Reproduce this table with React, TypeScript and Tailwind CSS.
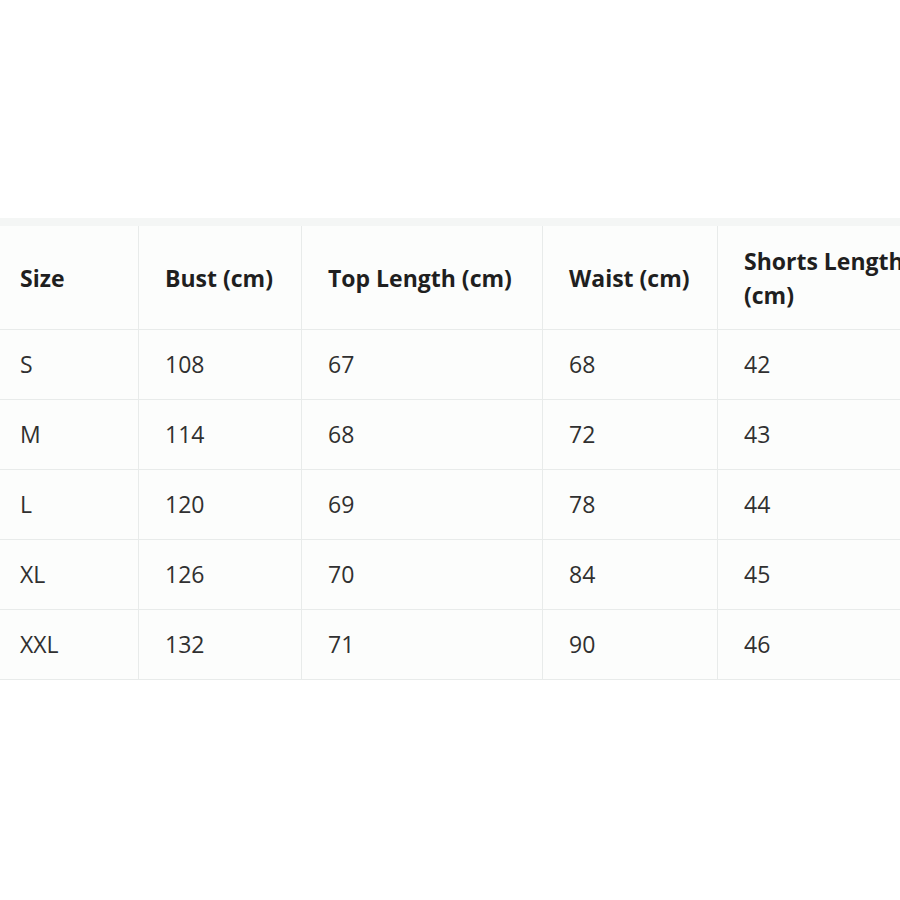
import React from "react";

const headers = ["Size", "Bust (cm)", "Top Length (cm)", "Waist (cm)", "Shorts Length (cm)"];
const rows = [
  ["S", "108", "67", "68", "42"],
  ["M", "114", "68", "72", "43"],
  ["L", "120", "69", "78", "44"],
  ["XL", "126", "70", "84", "45"],
  ["XXL", "132", "71", "90", "46"],
];

export default function App() {
  return (
    <div
      className="w-[900px] h-[900px] bg-white overflow-hidden pt-[218px]"
      style={{ fontFamily: '"Open Sans", "Noto Sans", sans-serif' }}
    >
      <div className="w-[960px] border-t-[8px] border-[#f4f6f5] bg-[#fcfdfc]">
        <div className="grid grid-cols-[139px_163px_241px_175px_242px]">
          {headers.map((h, i) => (
            <div
              key={h}
              className={`h-[104px] flex items-center border-b border-r border-[#e8ebea] text-[23px] leading-[34px] font-bold text-[#1f1f1f] ${
                i === 0 ? "pl-[20px]" : "pl-[26px]"
              } ${i === 4 ? "pr-[40px]" : "whitespace-nowrap"}`}
            >
              {h}
            </div>
          ))}
          {rows.map((r) =>
            r.map((c, i) => (
              <div
                key={r[0] + i}
                className={`h-[70px] flex items-center border-b border-r border-[#e8ebea] text-[23px] text-[#303030] ${
                  i === 0 ? "pl-[20px]" : "pl-[26px]"
                }`}
              >
                {c}
              </div>
            ))
          )}
        </div>
      </div>
    </div>
  );
}
